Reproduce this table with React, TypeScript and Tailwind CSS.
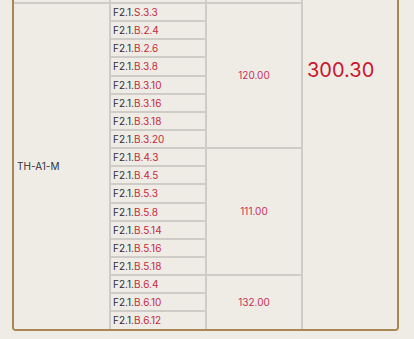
const codes = [
  "S.3.3",
  "B.2.4",
  "B.2.6",
  "B.3.8",
  "B.3.10",
  "B.3.16",
  "B.3.18",
  "B.3.20",
  "B.4.3",
  "B.4.5",
  "B.5.3",
  "B.5.8",
  "B.5.14",
  "B.5.16",
  "B.5.18",
  "B.6.4",
  "B.6.10",
  "B.6.12"
];

// price blocks keyed by the row index where they start
const priceStarts: Record<number, { value: string; span: string }> = {
  0: { value: "120.00", span: "row-span-8" },
  8: { value: "111.00", span: "row-span-7" },
  15: { value: "132.00", span: "row-span-3" }
};

const cell = "bg-[#efece6]";

export default function App() {
  return (
    <div className="min-h-screen bg-[#efece6] font-['Inter','Noto_Sans',sans-serif]">
      <div className="ml-[12px] w-[387px] overflow-hidden rounded-b-[4px] border-x-2 border-b-2 border-[#a98654]">
        <div className="grid grid-cols-[95px_94px_94px_94px] grid-rows-[2px_repeat(18,16.15px)] gap-[2px] bg-[#cfccc7]">
          {/* tail of the previous block */}
          <div className={cell} />
          <div className={cell} />
          <div className={cell} />
          <div className={`${cell} row-span-19 pl-[4px] pt-[58px]`}>
            <span className="text-[20px] leading-[24px] text-[#c8162f]">300.30</span>
          </div>

          <div className={`${cell} row-span-18 flex items-center pl-[3px] text-[10px] text-[#333333]`}>
            TH-A1-M
          </div>

          {codes.map((code, index) => {
            const price = priceStarts[index];
            return [
              <div
                key={code}
                className={`${cell} flex items-center pl-[2px] text-[10px] leading-none text-[#2e2e36]`}
              >
                F2.1.<span className="text-[#c42a3c]">{code}</span>
              </div>,
              price ? (
                <div
                  key={`price-${code}`}
                  className={`${cell} ${price.span} flex items-center justify-center text-[10px] text-[#c9305a]`}
                >
                  {price.value}
                </div>
              ) : null
            ];
          })}
        </div>
      </div>
    </div>
  );
}
